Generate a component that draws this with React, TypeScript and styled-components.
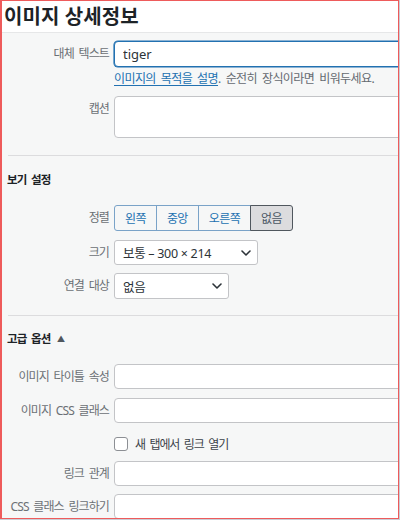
import React from "react";
import styled, { createGlobalStyle } from "styled-components";

const GlobalStyle = createGlobalStyle`
  html, body {
    margin: 0;
    padding: 0;
    background: #c9ced6;
  }
  * {
    box-sizing: border-box;
  }
`;

const FONT = `"Noto Sans", "Noto Sans CJK KR", sans-serif`;

const Chevron = () => (
  <svg width="10" height="6" viewBox="0 0 10 6" fill="none">
    <path d="M1 1l4 4 4-4" stroke="#2c3338" strokeWidth="1.6" strokeLinecap="round" strokeLinejoin="round" />
  </svg>
);

const App = () => {
  return (
    <>
      <GlobalStyle />
      <Frame>
        <Header>
          <Title>이미지 상세정보</Title>
        </Header>

        <Body>
          <Row $mt={8}>
            <Label $lh={26}>대체 텍스트</Label>
            <div>
              <Input $h={26} $focused defaultValue="tiger" />
              <Help>
                <a href="#">이미지의 목적을 설명</a>. 순전히 장식이라면 비워두세요.
              </Help>
            </div>
          </Row>

          <Row $mt={10}>
            <Label>캡션</Label>
            <TextArea />
          </Row>

          <Divider $mt={17} />
          <SectionTitle $mt={14}>보기 설정</SectionTitle>

          <Row $mt={15}>
            <Label $lh={26}>정렬</Label>
            <ButtonGroup>
              <AlignButton>왼쪽</AlignButton>
              <AlignButton>중앙</AlignButton>
              <AlignButton>오른쪽</AlignButton>
              <AlignButton $pressed>없음</AlignButton>
            </ButtonGroup>
          </Row>

          <Row $mt={9}>
            <Label>크기</Label>
            <Select $width={144} $h={25}>
              <span>보통 – 300 × 214</span>
              <Chevron />
            </Select>
          </Row>

          <Row $mt={8}>
            <Label $lh={26}>연결 대상</Label>
            <Select $width={115} $h={26}>
              <span>없음</span>
              <Chevron />
            </Select>
          </Row>

          <Divider $mt={16} />
          <SectionTitle $mt={13}>
            고급 옵션 <Arrow>▲</Arrow>
          </SectionTitle>

          <Row $mt={15}>
            <Label>이미지 타이틀 속성</Label>
            <Input />
          </Row>

          <Row $mt={9}>
            <Label>이미지 CSS 클래스</Label>
            <Input />
          </Row>

          <Row $mt={14}>
            <span />
            <CheckRow>
              <CheckBox />
              <CheckText>새 탭에서 링크 열기</CheckText>
            </CheckRow>
          </Row>

          <Row $mt={10}>
            <Label>링크 관계</Label>
            <Input />
          </Row>

          <Row $mt={8}>
            <Label>CSS 클래스 링크하기</Label>
            <Input />
          </Row>
        </Body>
      </Frame>
    </>
  );
};

export default App;

const Frame = styled.div`
  width: 399px;
  height: 519px;
  overflow: hidden;
  background: #f6f7f7;
  border: 1px solid #ee5b5b;
  border-left-width: 2px;
  font-family: ${FONT};
`;

const Header = styled.div`
  height: 32px;
  background: #ffffff;
  border-bottom: 1px solid #e6e7e8;
  display: flex;
  align-items: center;
  padding-left: 2px;
`;

const Title = styled.h1`
  margin: 0;
  font-size: 20px;
  font-weight: 700;
  letter-spacing: 0.1px;
  color: #1d2327;
  line-height: 30px;
`;

const Body = styled.div`
  display: flex;
  flex-direction: column;
`;

const Row = styled.div<{ $mt: number }>`
  display: grid;
  grid-template-columns: 107px 1fr;
  column-gap: 5px;
  align-items: start;
  margin-top: ${(p) => p.$mt}px;
`;

const Label = styled.label<{ $lh?: number }>`
  text-align: right;
  font-size: 12px;
  letter-spacing: -0.9px;
  word-spacing: 2.5px;
  line-height: ${(p) => p.$lh ?? 25}px;
  color: #6b7075;
  white-space: nowrap;
`;

const Input = styled.input<{ $focused?: boolean; $h?: number }>`
  display: block;
  width: 300px;
  height: ${(p) => p.$h ?? 25}px;
  padding: 0 8px;
  background: #ffffff;
  border: 1px solid ${(p) => (p.$focused ? "#2271b1" : "#c3c4c7")};
  box-shadow: ${(p) => (p.$focused ? "0 0 0 0.6px #2271b1" : "none")};
  border-radius: 4px;
  font-family: ${FONT};
  font-size: 13px;
  color: #2c3338;
  outline: none;
`;

const TextArea = styled.textarea`
  display: block;
  width: 300px;
  height: 42px;
  background: #ffffff;
  border: 1px solid #c3c4c7;
  border-radius: 4px;
  resize: none;
  outline: none;
`;

const Help = styled.p`
  margin: 4px 0 0;
  font-size: 12px;
  letter-spacing: -0.6px;
  word-spacing: 2.5px;
  line-height: 15px;
  color: #646970;
  white-space: nowrap;

  a {
    color: #2271b1;
    text-decoration: underline;
    text-underline-offset: 2px;
  }
`;

const Divider = styled.hr<{ $mt: number }>`
  margin: ${(p) => p.$mt}px 0 0 6px;
  border: none;
  border-top: 1px solid #dcdcde;
  height: 0;
`;

const SectionTitle = styled.h2<{ $mt: number }>`
  margin: ${(p) => p.$mt}px 0 0 5px;
  font-size: 11.5px;
  font-weight: 600;
  letter-spacing: -0.9px;
  word-spacing: 2.5px;
  line-height: 20px;
  color: #1d2327;
`;

const Arrow = styled.span`
  font-size: 8px;
  color: #50575e;
  margin-left: 2px;
  vertical-align: 1px;
`;

const ButtonGroup = styled.div`
  display: flex;
  height: 26px;
`;

const AlignButton = styled.button<{ $pressed?: boolean }>`
  height: 26px;
  padding: 0 10px;
  margin-left: -1px;
  font-family: ${FONT};
  font-size: 12px;
  letter-spacing: -0.6px;
  color: ${(p) => (p.$pressed ? "#4a5764" : "#2271b1")};
  background: ${(p) => (p.$pressed ? "#dcdcde" : "#f6f7f7")};
  border: 1px solid ${(p) => (p.$pressed ? "#50575e" : "#7aa3c8")};
  position: relative;
  z-index: ${(p) => (p.$pressed ? 1 : 0)};

  &:first-child {
    margin-left: 0;
    border-radius: 3px 0 0 3px;
  }
  &:last-child {
    border-radius: 0 3px 3px 0;
  }
`;

const Select = styled.div<{ $width: number; $h: number }>`
  width: ${(p) => p.$width}px;
  height: ${(p) => p.$h}px;
  display: flex;
  align-items: center;
  justify-content: space-between;
  padding: 0 6px 0 8px;
  background: #ffffff;
  border: 1px solid #c3c4c7;
  border-radius: 3px;
  font-size: 12.5px;
  color: #2c3338;
  letter-spacing: -0.3px;
  white-space: nowrap;
`;

const CheckRow = styled.div`
  display: flex;
  align-items: center;
  gap: 7px;
  height: 14px;
`;

const CheckBox = styled.span`
  width: 14px;
  height: 14px;
  background: #ffffff;
  border: 1px solid #8c8f94;
  border-radius: 3px;
`;

const CheckText = styled.span`
  font-size: 12px;
  letter-spacing: -1.1px;
  word-spacing: 2.5px;
  color: #3c434a;
`;
